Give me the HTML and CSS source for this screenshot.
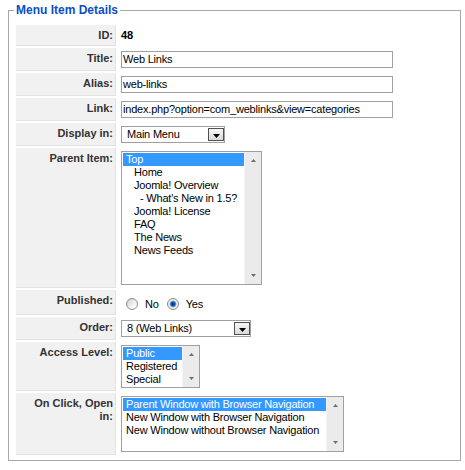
FILE: index.html
```html
<!DOCTYPE html>
<html>
<head>
<meta charset="utf-8">
<title>Menu Item Details</title>
<link rel="stylesheet" href="styles.css">
</head>
<body>
<div class="page">
  <fieldset class="panel">
    <legend class="panel-title">Menu Item Details</legend>
    <table class="admintable">
      <tr>
        <td class="key">ID:</td>
        <td class="val val-text"><strong>48</strong></td>
      </tr>
      <tr>
        <td class="key">Title:</td>
        <td class="val"><div class="textbox">Web Links</div></td>
      </tr>
      <tr>
        <td class="key">Alias:</td>
        <td class="val"><div class="textbox">web-links</div></td>
      </tr>
      <tr>
        <td class="key">Link:</td>
        <td class="val"><div class="textbox">index.php?option=com_weblinks&amp;view=categories</div></td>
      </tr>
      <tr>
        <td class="key">Display in:</td>
        <td class="val">
          <div class="dropdown dd-menu">
            <span class="dropdown-value">Main Menu</span>
            <span class="dropdown-btn"><svg width="7" height="4" viewBox="0 0 7 4"><path d="M0 0H7L3.5 4Z" fill="#000"/></svg></span>
          </div>
        </td>
      </tr>
      <tr>
        <td class="key">Parent Item:</td>
        <td class="val">
          <div class="listbox lb-parent">
            <ul class="options">
              <li class="opt selected ind0">Top</li>
              <li class="opt ind1">Home</li>
              <li class="opt ind1">Joomla! Overview</li>
              <li class="opt ind2">- What's New in 1.5?</li>
              <li class="opt ind1">Joomla! License</li>
              <li class="opt ind1">FAQ</li>
              <li class="opt ind1">The News</li>
              <li class="opt ind1">News Feeds</li>
            </ul>
            <div class="scrollbar">
              <span class="sb-btn"><svg width="5" height="3" viewBox="0 0 5 3"><path d="M2.5 0L5 3H0Z" fill="#6e6e6e"/></svg></span>
              <span class="sb-btn"><svg width="5" height="3" viewBox="0 0 5 3"><path d="M0 0H5L2.5 3Z" fill="#6e6e6e"/></svg></span>
            </div>
          </div>
        </td>
      </tr>
      <tr>
        <td class="key">Published:</td>
        <td class="val val-radios">
          <div class="radios">
            <span class="radio-opt"><span class="radio"></span><span class="radio-text">No</span></span>
            <span class="radio-opt"><span class="radio on"></span><span class="radio-text">Yes</span></span>
          </div>
        </td>
      </tr>
      <tr>
        <td class="key">Order:</td>
        <td class="val">
          <div class="dropdown dd-order">
            <span class="dropdown-value">8 (Web Links)</span>
            <span class="dropdown-btn"><svg width="7" height="4" viewBox="0 0 7 4"><path d="M0 0H7L3.5 4Z" fill="#000"/></svg></span>
          </div>
        </td>
      </tr>
      <tr>
        <td class="key">Access Level:</td>
        <td class="val">
          <div class="listbox lb-access">
            <ul class="options">
              <li class="opt selected ind0">Public</li>
              <li class="opt ind0">Registered</li>
              <li class="opt ind0">Special</li>
            </ul>
            <div class="scrollbar">
              <span class="sb-btn"><svg width="5" height="3" viewBox="0 0 5 3"><path d="M2.5 0L5 3H0Z" fill="#6e6e6e"/></svg></span>
              <span class="sb-btn"><svg width="5" height="3" viewBox="0 0 5 3"><path d="M0 0H5L2.5 3Z" fill="#6e6e6e"/></svg></span>
            </div>
          </div>
        </td>
      </tr>
      <tr>
        <td class="key">On Click, Open in:</td>
        <td class="val">
          <div class="listbox lb-target">
            <ul class="options">
              <li class="opt selected ind0">Parent Window with Browser Navigation</li>
              <li class="opt ind0">New Window with Browser Navigation</li>
              <li class="opt ind0">New Window without Browser Navigation</li>
            </ul>
            <div class="scrollbar">
              <span class="sb-btn"><svg width="5" height="3" viewBox="0 0 5 3"><path d="M2.5 0L5 3H0Z" fill="#6e6e6e"/></svg></span>
              <span class="sb-btn"><svg width="5" height="3" viewBox="0 0 5 3"><path d="M0 0H5L2.5 3Z" fill="#6e6e6e"/></svg></span>
            </div>
          </div>
        </td>
      </tr>
    </table>
  </fieldset>
</div>
</body>
</html>
```

FILE: styles.css
```css
html, body {
  margin: 0;
  padding: 0;
  background: #ffffff;
}

body {
  font-family: "Liberation Sans", Arial, sans-serif;
  font-size: 11px;
  color: #000;
}

.page {
  padding: 3px 4px 0 8px;
}

.panel {
  margin: 0;
  border: 1px solid #a8a8a8;
  padding: 5px 6px 3px 6px;
}

.panel-title {
  margin-left: -1px;
  padding: 0 2px;
  font-size: 12px;
  line-height: 15px;
  font-weight: bold;
  color: #0b4ec4;
}

.admintable {
  border-collapse: separate;
  border-spacing: 1px 2px;
}

.key {
  width: 93px;
  padding: 4px 2px 3px 4px;
  background: #f1f1f1;
  border-right: 1px solid #e2e2e2;
  border-bottom: 1px solid #e2e2e2;
  text-align: right;
  vertical-align: top;
  font-weight: bold;
  line-height: 13px;
  color: #333;
}

.val {
  padding: 3px 4px;
  vertical-align: top;
}

.val-text {
  padding-top: 4px;
  line-height: 13px;
}

.val-radios {
  padding-top: 8px;
  padding-bottom: 4px;
}

/* text input */
.textbox {
  box-sizing: border-box;
  width: 272px;
  height: 17px;
  border: 1px solid #a0a0a0;
  padding: 0 1px;
  line-height: 15px;
  letter-spacing: -0.2px;
  white-space: nowrap;
  overflow: hidden;
}

/* dropdown select */
.dropdown {
  box-sizing: border-box;
  display: flex;
  height: 17px;
  border: 1px solid #a0a0a0;
  padding: 1px 0 1px 1px;
}

.dd-menu { width: 104px; }
.dd-order { width: 130px; }

.dropdown-value {
  flex: 1;
  padding-left: 4px;
  line-height: 13px;
  letter-spacing: -0.2px;
  white-space: nowrap;
}

.dropdown-btn {
  box-sizing: border-box;
  width: 16px;
  height: 13px;
  border: 1px solid #505050;
  background: linear-gradient(#f6f6f6, #dadada);
  display: flex;
  align-items: center;
  justify-content: center;
  padding-top: 2px;
}

.dropdown-btn svg { display: block; }

/* list box */
.listbox {
  box-sizing: border-box;
  display: flex;
  border: 1px solid #a0a0a0;
  background: #fff;
}

.lb-parent { width: 141px; height: 134px; }
.lb-access { width: 79px; height: 43px; }
.lb-target { width: 223px; height: 56px; }

.options {
  flex: 1;
  list-style: none;
  margin: 0;
  padding: 1px 0 1px 1px;
  overflow: hidden;
}

.opt {
  line-height: 13px;
  height: 13px;
  white-space: nowrap;
  letter-spacing: -0.2px;
}

.opt.selected {
  background: #3399ff;
  color: #fff;
}

.ind0 { padding-left: 3px; }
.ind1 { padding-left: 11px; }
.ind2 { padding-left: 17px; }

.scrollbar {
  width: 16px;
  background: #ebebeb;
  border-left: 1px solid #f4f4f4;
  display: flex;
  flex-direction: column;
  justify-content: space-between;
}

.sb-btn {
  height: 17px;
  display: flex;
  align-items: center;
  justify-content: center;
}

.sb-btn svg { display: block; }

/* radios */
.radios {
  display: flex;
  align-items: flex-start;
}

.radio-opt {
  display: flex;
  align-items: flex-start;
  margin-left: 5px;
}

.radio-opt + .radio-opt {
  margin-left: 8px;
}

.radio {
  box-sizing: border-box;
  width: 12px;
  height: 12px;
  border-radius: 50%;
  border: 1px solid #8c8c8c;
  background: linear-gradient(135deg, #cfcfcf, #fbfbfb 75%);
}

.radio.on {
  background: radial-gradient(circle, #0c2a5c 0, #1d5cab 2px, #6ba6e6 3px, #f2f2f2 3.8px, #d8d8d8 100%);
}

.radio-text {
  margin-left: 7px;
  line-height: 13px;
  letter-spacing: -0.2px;
}
```
